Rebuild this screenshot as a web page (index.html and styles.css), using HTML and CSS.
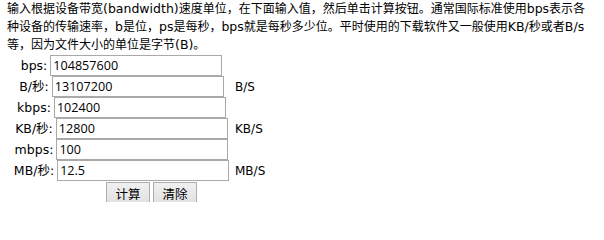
FILE: index.html
```html
<!DOCTYPE html>
<html lang="zh-CN">
<head>
<meta charset="utf-8">
<title>带宽单位换算</title>
<link rel="stylesheet" href="styles.css">
</head>
<body>
<div class="page">
  <p class="intro">输入根据设备带宽<span class="en">(bandwidth)</span>速度单位，在下面输入值，然后单击计算按钮。通常国际标准使用<span class="en">bps</span>表示各种设备的传输速率，<span class="en">b</span>是位，<span class="en">ps</span>是每秒，<span class="en">bps</span>就是每秒多少位。平时使用的下载软件又一般使用<span class="en">KB/</span>秒或者<span class="en">B/s</span>等，因为文件大小的单位是字节<span class="en">(B)</span>。</p>
  <div class="calc">
    <div class="field"><span class="label">bps:</span><input class="num" type="text" value="104857600"></div><div class="unit"></div>
    <div class="field"><span class="label">B/秒:</span><input class="num" type="text" value="13107200"></div><div class="unit">B/S</div>
    <div class="field"><span class="label">kbps:</span><input class="num" type="text" value="102400"></div><div class="unit"></div>
    <div class="field"><span class="label">KB/秒:</span><input class="num" type="text" value="12800"></div><div class="unit">KB/S</div>
    <div class="field"><span class="label">mbps:</span><input class="num" type="text" value="100"></div><div class="unit"></div>
    <div class="field"><span class="label">MB/秒:</span><input class="num" type="text" value="12.5"></div><div class="unit">MB/S</div>
    <div class="actions"><button class="btn" type="button">计算</button><button class="btn" type="button">清除</button></div>
  </div>
</div>
</body>
</html>
```

FILE: styles.css
```css
html, body {
  margin: 0;
  padding: 0;
  background: #ffffff;
}
.page {
  padding: 0 7px;
  font-family: "DejaVu Sans", "Noto Sans CJK SC", sans-serif;
  font-size: 12px;
  color: #000000;
}
.intro {
  margin: 0;
  width: 580px;
  line-height: 18px;
}
.intro .en {
  font-size: 12.5px;
}
.calc {
  display: grid;
  grid-template-columns: 227px 60px;
  grid-auto-rows: 21px;
  margin: 1px 0 0 1px;
}
.field {
  display: flex;
  justify-content: center;
  align-items: baseline;
  gap: 3px;
  white-space: nowrap;
}
.label {
  font-size: 12.5px;
}
.unit {
  display: flex;
  align-items: center;
  white-space: nowrap;
  font-size: 12px;
}
.num {
  box-sizing: border-box;
  width: 172px;
  height: 21px;
  margin: 0;
  padding: 0 2px;
  border: 1px solid #a9a9a9;
  font-family: "Open Sans", "Noto Sans CJK SC", sans-serif;
  font-size: 12.6px;
  color: #000000;
  background: #ffffff;
}
.actions {
  grid-column: 1 / -1;
  display: flex;
  justify-content: center;
  gap: 3px;
  margin-top: 1px;
  height: 22px;
}
.btn {
  box-sizing: border-box;
  width: 44px;
  height: 22px;
  margin: 0;
  padding: 0;
  border: 1px solid #adadad;
  background: linear-gradient(#f0f0f0, #e1e1e1);
  font-family: "Noto Sans CJK SC", sans-serif;
  font-size: 12.5px;
  color: #000000;
}
```
